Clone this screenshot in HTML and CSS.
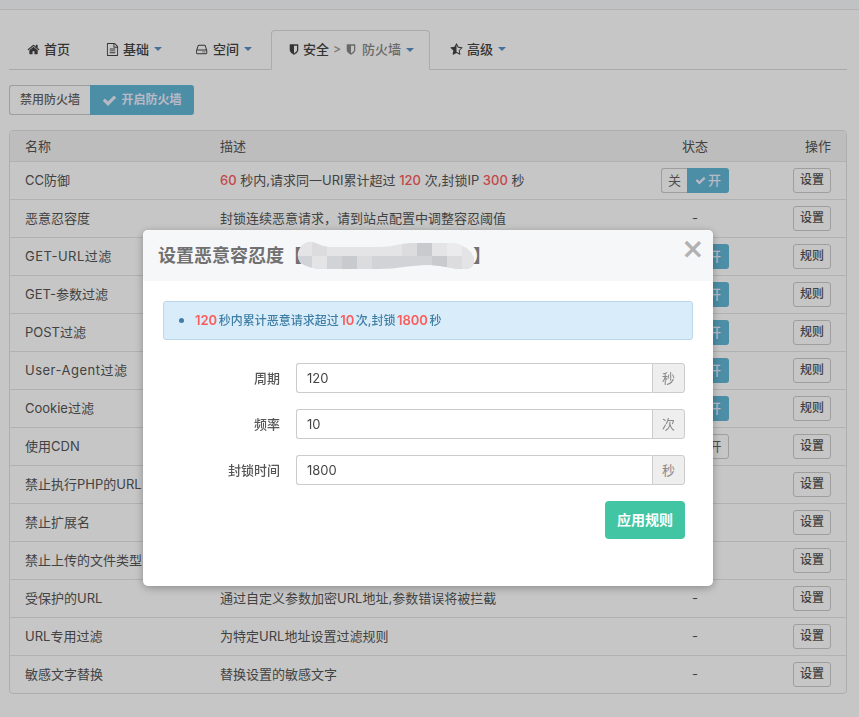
FILE: index.html
```html
<!DOCTYPE html>
<html lang="zh-CN">
<head>
<meta charset="utf-8">
<title>防火墙</title>
<link rel="stylesheet" href="styles.css">
</head>
<body>
<svg class="sprite" aria-hidden="true">
  <symbol id="i-home" viewBox="0 0 1792 1792"><path d="M1472 992v480q0 26-19 45t-45 19h-384v-384h-256v384h-384q-26 0-45-19t-19-45v-480q0-1 .5-3t.5-3l575-474 575 474q1 2 1 6zm223-69l-62 74q-8 9-21 11h-3q-13 0-21-7l-692-577-692 577q-12 8-24 7-13-2-21-11l-62-74q-8-10-7-23.500t11-21.500l719-599q32-26 76-26t76 26l244 204v-195q0-14 9-23t23-9h192q14 0 23 9t9 23v408l219 182q10 8 11 21.500t-7 23.500z"/></symbol>
  <symbol id="i-file" viewBox="0 0 1792 1792"><path d="M1596 380q28 28 48 76t20 88v1152q0 40-28 68t-68 28h-1344q-40 0-68-28t-28-68v-1600q0-40 28-68t68-28h896q40 0 88 20t76 48zm-444-244v376h376q-10-29-22-41l-313-313q-12-12-41-22zm384 1528v-1024h-416q-40 0-68-28t-28-68v-416h-768v1536h1280zm-1024-864q0-14 9-23t23-9h704q14 0 23 9t9 23v64q0 14-9 23t-23 9h-704q-14 0-23-9t-9-23v-64zm736 224q14 0 23 9t9 23v64q0 14-9 23t-23 9h-704q-14 0-23-9t-9-23v-64q0-14 9-23t23-9h704zm0 256q14 0 23 9t9 23v64q0 14-9 23t-23 9h-704q-14 0-23-9t-9-23v-64q0-14 9-23t23-9h704z"/></symbol>
  <symbol id="i-hdd" viewBox="0 0 1792 1792"><path d="M1040 1216q0 33-23.500 56.500t-56.500 23.500-56.500-23.500-23.500-56.500 23.500-56.500 56.500-23.500 56.500 23.500 23.500 56.500zm256 0q0 33-23.500 56.500t-56.500 23.500-56.500-23.500-23.500-56.500 23.500-56.500 56.500-23.500 56.500 23.500 23.500 56.500zm128 160v-320q0-13-9.500-22.500t-22.500-9.500h-1216q-13 0-22.500 9.500t-9.500 22.500v320q0 13 9.500 22.500t22.500 9.500h1216q13 0 22.500-9.500t9.500-22.500zm-1230-480h1180l-157-482q-4-13-16-21.500t-26-8.500h-782q-14 0-26 8.500t-16 21.500zm1358 160v320q0 66-47 113t-113 47h-1216q-66 0-113-47t-47-113v-320q0-25 16-75l197-606q17-53 63-86t101-33h782q55 0 101 33t63 86l197 606q16 50 16 75z"/></symbol>
  <symbol id="i-shield" viewBox="0 0 1792 1792"><path d="M1344 960v-640h-448v1137q119-63 213-137 235-184 235-360zm192-768v768q0 86-33.500 170.500t-83 150-118 127.500-126.500 103-121 77.500-89.500 49.500-42.500 20q-12 6-26 6t-26-6q-16-7-42.500-20t-89.500-49.500-121-77.500-126.500-103-118-127.500-83-150-33.500-170.500v-768q0-26 19-45t45-19h1152q26 0 45 19t19 45z"/></symbol>
  <symbol id="i-star" viewBox="0 0 1792 1792"><path d="M1250 957l257-250-356-52-66-10-30-60-159-322v963l59 31 318 168-60-355-12-66zm452-262l-363 354 86 500q5 33-6 51.500t-34 18.500q-17 0-40-12l-449-236-449 236q-23 12-40 12-23 0-34-18.500t-6-51.500l86-500-364-354q-32-32-23-59.500t54-34.500l502-73 225-455q20-41 49-41 28 0 49 41l225 455 502 73q45 7 54 34.500t-24 59.500z"/></symbol>
  <symbol id="i-check" viewBox="0 0 1792 1792"><path d="M1671 566q0 40-28 68l-724 724-136 136q-28 28-68 28t-68-28l-136-136-362-362q-28-28-28-68t28-68l136-136q28-28 68-28t68 28l294 295 656-657q28-28 68-28t68 28l136 136q28 28 28 68z"/></symbol>
</svg>

<div class="topbar"></div>

<main class="page">
  <nav class="tabs">
    <a class="tab tab-home"><svg class="icon"><use href="#i-home"/></svg>首页</a>
    <a class="tab tab-basic"><svg class="icon"><use href="#i-file"/></svg>基础<span class="caret"></span></a>
    <a class="tab tab-space"><svg class="icon"><use href="#i-hdd"/></svg>空间<span class="caret"></span></a>
    <a class="tab tab-active"><svg class="icon"><use href="#i-shield"/></svg>安全<span class="crumb">&gt;</span><span class="sub"><svg class="icon"><use href="#i-shield"/></svg>防火墙</span><span class="caret"></span></a>
    <a class="tab tab-adv"><svg class="icon"><use href="#i-star"/></svg>高级<span class="caret"></span></a>
  </nav>

  <div class="switch switch-lg">
    <span class="sw-off">禁用防火墙</span>
    <span class="sw-on"><svg class="icon"><use href="#i-check"/></svg>开启防火墙</span>
  </div>

  <div class="panel">
    <table class="rules">
      <thead>
        <tr><th class="c-name">名称</th><th class="c-desc">描述</th><th class="c-state">状态</th><th class="c-op">操作</th></tr>
      </thead>
      <tbody>
        <tr><td>CC防御</td><td><b>60</b> 秒内,请求同一URI累计超过 <b>120</b> 次,封锁IP <b>300</b> 秒</td><td class="c-state"><span class="switch"><span class="sw-off">关</span><span class="sw-on"><svg class="icon"><use href="#i-check"/></svg>开</span></span></td><td class="c-op"><button class="btn">设置</button></td></tr>
        <tr><td>恶意忍容度</td><td>封锁连续恶意请求，请到站点配置中调整容忍阈值</td><td class="c-state">-</td><td class="c-op"><button class="btn">设置</button></td></tr>
        <tr><td class="wide">GET-URL过滤</td><td></td><td class="c-state"><span class="switch"><span class="sw-off">关</span><span class="sw-on"><svg class="icon"><use href="#i-check"/></svg>开</span></span></td><td class="c-op"><button class="btn">规则</button></td></tr>
        <tr><td>GET-参数过滤</td><td></td><td class="c-state"><span class="switch"><span class="sw-off">关</span><span class="sw-on"><svg class="icon"><use href="#i-check"/></svg>开</span></span></td><td class="c-op"><button class="btn">规则</button></td></tr>
        <tr><td>POST过滤</td><td></td><td class="c-state"><span class="switch"><span class="sw-off">关</span><span class="sw-on"><svg class="icon"><use href="#i-check"/></svg>开</span></span></td><td class="c-op"><button class="btn">规则</button></td></tr>
        <tr><td class="wide">User-Agent过滤</td><td></td><td class="c-state"><span class="switch"><span class="sw-off">关</span><span class="sw-on"><svg class="icon"><use href="#i-check"/></svg>开</span></span></td><td class="c-op"><button class="btn">规则</button></td></tr>
        <tr><td>Cookie过滤</td><td></td><td class="c-state"><span class="switch"><span class="sw-off">关</span><span class="sw-on"><svg class="icon"><use href="#i-check"/></svg>开</span></span></td><td class="c-op"><button class="btn">规则</button></td></tr>
        <tr><td>使用CDN</td><td></td><td class="c-state"><span class="switch"><span class="sw-off">关</span><span class="sw-off">开</span></span></td><td class="c-op"><button class="btn">设置</button></td></tr>
        <tr><td>禁止执行PHP的URL</td><td></td><td class="c-state">-</td><td class="c-op"><button class="btn">设置</button></td></tr>
        <tr><td>禁止扩展名</td><td></td><td class="c-state">-</td><td class="c-op"><button class="btn">设置</button></td></tr>
        <tr><td>禁止上传的文件类型</td><td></td><td class="c-state">-</td><td class="c-op"><button class="btn">设置</button></td></tr>
        <tr><td>受保护的URL</td><td>通过自定义参数加密URL地址,参数错误将被拦截</td><td class="c-state">-</td><td class="c-op"><button class="btn">设置</button></td></tr>
        <tr><td>URL专用过滤</td><td>为特定URL地址设置过滤规则</td><td class="c-state">-</td><td class="c-op"><button class="btn">设置</button></td></tr>
        <tr><td>敏感文字替换</td><td>替换设置的敏感文字</td><td class="c-state">-</td><td class="c-op"><button class="btn">设置</button></td></tr>
      </tbody>
    </table>
  </div>
</main>

<div class="backdrop"></div>

<section class="modal">
  <header class="modal-head">
    <h2 class="modal-title">设置恶意容忍度【<svg class="redacted" viewBox="0 0 180 30" aria-hidden="true">
      <clipPath id="blob"><path d="M2 12C4 4 10 0 16 1c6 1 10 5 18 5h50c12 0 20-4 34-4h34c8 0 14 2 20 6 4 3 6 8 6 12 0 5-4 8-9 8-14 0-24-4-36-4-18 0-32 4-50 4H30C14 28 0 24 2 12z"/></clipPath>
      <g clip-path="url(#blob)">
        <rect class="m1" width="180" height="15"/><rect class="m3" y="15" width="180" height="15"/>
        <rect class="m2" x="16" y="0" width="15" height="15"/><rect class="m1" x="16" y="15" width="15" height="15"/>
        <rect class="m2" x="61" y="15" width="15" height="15"/><rect class="m4" x="46" y="15" width="15" height="15"/>
        <rect class="m2" x="106" y="0" width="15" height="15"/><rect class="m4" x="121" y="0" width="15" height="15"/>
        <rect class="m4" x="136" y="15" width="15" height="15"/><rect class="m2" x="151" y="15" width="15" height="15"/>
        <rect class="m0" x="151" y="0" width="15" height="15"/><rect class="m1" x="166" y="15" width="15" height="15"/>
      </g></svg>】</h2>
    <span class="modal-close">×</span>
  </header>
  <div class="modal-body">
    <div class="alert"><span class="dot"></span><span><b>120</b> 秒内累计恶意请求超过 <b>10</b> 次,封锁 <b>1800</b> 秒</span></div>
    <form class="form">
      <div class="field"><label>周期</label><div class="input-group"><input type="text" value="120"><span class="addon">秒</span></div></div>
      <div class="field"><label>频率</label><div class="input-group"><input type="text" value="10"><span class="addon">次</span></div></div>
      <div class="field"><label>封锁时间</label><div class="input-group"><input type="text" value="1800"><span class="addon">秒</span></div></div>
      <div class="actions"><button type="button" class="btn-apply">应用规则</button></div>
    </form>
  </div>
</section>
</body>
</html>
```
FILE: styles.css
```css
* { box-sizing: border-box; }
html, body { margin: 0; padding: 0; height: 717px; overflow: hidden; }
body {
  background: #fff;
  color: #555;
  font: 13px/1.4 Inter, "Noto Sans CJK SC", "Noto Sans", sans-serif;
}
.sprite { display: none; }
.icon { width: 13px; height: 13px; fill: currentColor; flex: none; }

.topbar { height: 10px; background: #f9fafc; border-bottom: 1px solid #e6e7ea; }
.page { padding: 20px 12px 0 9px; }

.tabs { display: flex; height: 40px; border-bottom: 1px solid #ddd; align-items: stretch; }
.tab {
  display: flex; align-items: center; color: #444; font-weight: 500; padding-bottom: 1px;
  white-space: nowrap;
}
.tab .icon { margin-right: 4px; }
.tab-home { margin-left: 18px; width: 79px; }
.tab-basic { width: 90px; }
.tab-space { width: 75px; }
.tab-active {
  width: 159px; height: 40px; padding-left: 16px;
  border: 1px solid #ddd; border-bottom-color: #fff; border-radius: 4px 4px 0 0;
  background: #fff;
}
.tab-adv { margin-left: 20px; }
.tab-active .icon { margin-right: 3px; width: 12px; }
.crumb { color: #999; margin: 0 4px 0 4px; font-size: 12px; }
.sub { display: flex; align-items: center; color: #888; }
.sub .icon { margin-right: 5px; }
.caret {
  margin-left: 5px; width: 0; height: 0;
  border-left: 4px solid transparent; border-right: 4px solid transparent; border-top: 4px solid #5b8fc7;
}

.switch { display: inline-flex; vertical-align: middle; white-space: nowrap; }
.sw-off {
  display: flex; align-items: center; justify-content: center; width: 26px; height: 25px; background: #fff; color: #666;
  border: 1px solid #ccc; border-radius: 3px 0 0 3px; border-right: 0;
}
.sw-off + .sw-off { width: 41px; justify-content: flex-end; padding-right: 6px; border-radius: 0 3px 3px 0; border-right: 1px solid #ccc; border-left: 1px solid #ccc; }
.sw-on {
  display: flex; align-items: center; justify-content: center; gap: 2px; width: 42px; height: 25px;
  color: #eef; background: #61b7d6; border-radius: 0 3px 3px 0; font-weight: 500;
}
.sw-on .icon { width: 11px; height: 11px; }
.switch-lg { display: flex; margin-top: 15px; height: 30px; font-size: 12px; }
.switch-lg .sw-off { height: 30px; width: 81px; font-weight: 500; }
.switch-lg .sw-on { height: 30px; width: 104px; gap: 4px; font-weight: 600; }
.switch-lg .sw-on .icon { width: 15px; height: 15px; }

.panel {
  margin: 15px 0 0 0; width: 838px; border: 1px solid #e1e1e1; border-radius: 4px; overflow: hidden;
}
.rules { width: 100%; border-collapse: collapse; table-layout: fixed; }
.rules th {
  background: #f4f4f4; height: 30px; font-weight: 400; text-align: left; padding: 0 15px; color: #555;
}
.rules td { height: 38px; padding: 0 15px; border-top: 1px solid #e4e4e4; white-space: nowrap; color: #555; }
.rules td.wide { letter-spacing: .5px; }
.rules b { color: #fb5c5c; font-weight: 500; }
.c-name { width: 195px; }
.c-desc { width: auto; }
.rules .c-state { width: 130px; text-align: center; padding: 0; }
.rules .c-op { width: 86px; text-align: right; padding: 0 15px 0 0; }
.btn {
  width: 38px; height: 25px; padding: 0; background: #fff; color: #555; font: inherit; font-size: 12px; font-weight: 500;
  border: 1px solid #ccc; border-radius: 3px; vertical-align: middle;
}

.backdrop { position: fixed; inset: 0; background: rgba(0, 0, 0, .225); }

.modal {
  position: fixed; left: 143px; top: 230px; width: 570px; height: 356px;
  background: #fff; border-radius: 5px; overflow: hidden;
  box-shadow: 0 2px 8px rgba(0, 0, 0, .3);
}
.modal-head { position: relative; height: 51px; background: #f6f7f9; padding: 0 15px; display: flex; align-items: center; }
.modal-title { margin: 0; display: flex; align-items: center; font-size: 18px; font-weight: 700; color: #707070; }
.redacted { display: block; width: 180px; height: 30px; margin: 0 -3px 0 -6px; flex: none; }
.m0 { fill: #ebebed; }
.m1 { fill: #e4e4e6; }
.m2 { fill: #dcdcdf; }
.m3 { fill: #d2d3d6; }
.m4 { fill: #c9cacd; }
.modal-close {
  position: absolute; right: 11px; top: 0; font: 400 30px/37px "Liberation Sans", sans-serif; color: #b0b0b0;
  -webkit-text-stroke: .6px #b0b0b0; transform: scale(1.15);
}
.modal-body { padding: 20px 20px 0; }
.alert {
  display: flex; align-items: center; height: 39px; padding-left: 15px; gap: 11px; font-size: 12px;
  word-spacing: -1.7px;
  background: #d9ecf9; border: 1px solid #bcd6ea; border-radius: 3px; color: #3f7fa6; font-weight: 500;
}
.alert b { color: #fb5c5c; font-weight: 600; font-size: 13px; }
.dot { width: 5px; height: 5px; border-radius: 50%; background: #3f7fa6; }
.form { margin-top: 23px; padding-right: 8px; }
.field { display: flex; align-items: center; margin-bottom: 16px; }
.field label { width: 117px; text-align: right; margin-right: 16px; color: #555; font-weight: 500; }
.input-group { flex: 1; display: flex; height: 30px; }
.input-group input {
  flex: 1; min-width: 0; padding: 0 10px; font: inherit; color: #444;
  border: 1px solid #ccc; border-right: 0; border-radius: 3px 0 0 3px; outline: 0;
}
.addon {
  width: 33px; flex: none; display: flex; align-items: center; justify-content: center; color: #888;
  background: #eee; border: 1px solid #ccc; border-radius: 0 3px 3px 0;
}
.actions { display: flex; justify-content: flex-end; }
.btn-apply {
  width: 80px; height: 38px; background: #41c5a3; color: #fff; border: 0; border-radius: 4px;
  font: inherit; font-size: 14px; font-weight: 700;
}
```
